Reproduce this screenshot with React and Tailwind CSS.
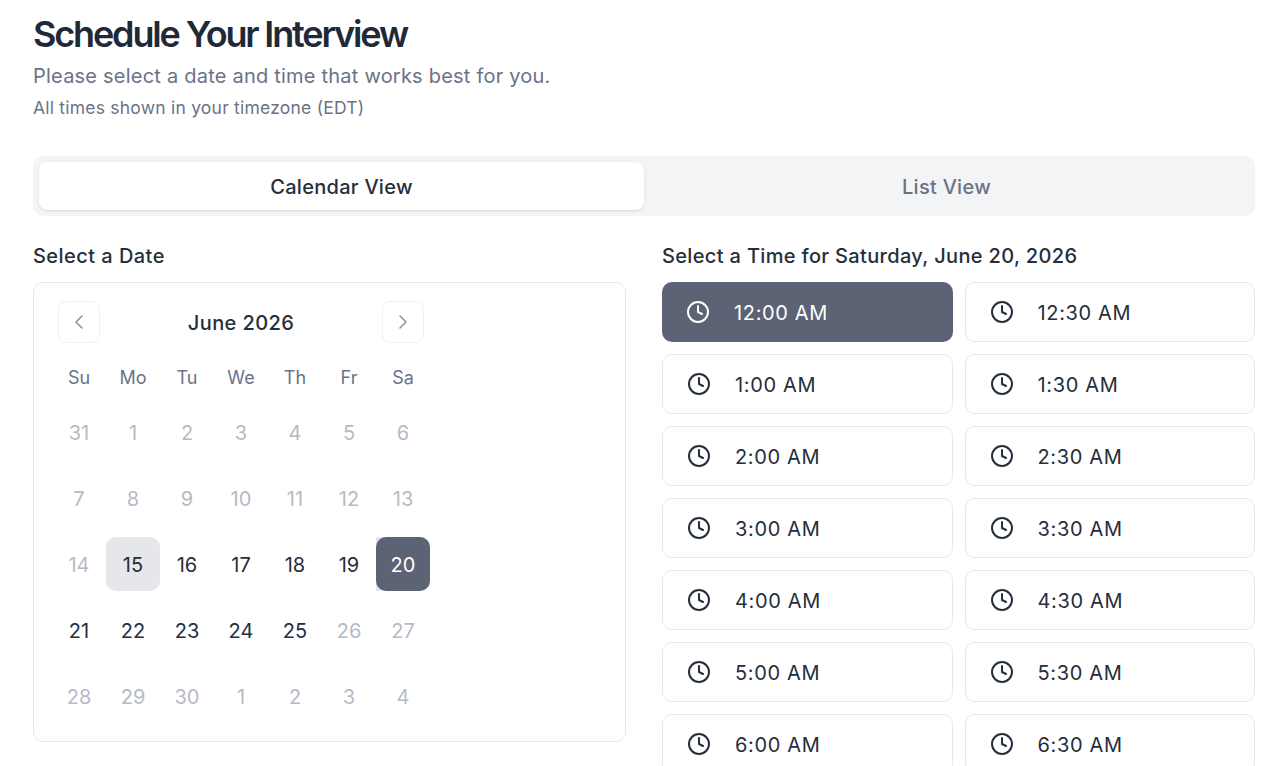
import { Clock, ChevronLeft, ChevronRight } from 'lucide-react'
import clsx from 'clsx'

const weekdays = ['Su', 'Mo', 'Tu', 'We', 'Th', 'Fr', 'Sa']

const days = [
  [31, 1, 2, 3, 4, 5, 6].map((d) => ({ d, muted: true })),
  [7, 8, 9, 10, 11, 12, 13].map((d) => ({ d, muted: true })),
  [{ d: 14, muted: true }, { d: 15, today: true }, { d: 16 }, { d: 17 }, { d: 18 }, { d: 19 }, { d: 20, selected: true }],
  [{ d: 21 }, { d: 22 }, { d: 23 }, { d: 24 }, { d: 25 }, { d: 26, muted: true }, { d: 27, muted: true }],
  [28, 29, 30, 1, 2, 3, 4].map((d) => ({ d, muted: true })),
]

const times = ['12:00 AM', '12:30 AM', '1:00 AM', '1:30 AM', '2:00 AM', '2:30 AM', '3:00 AM', '3:30 AM', '4:00 AM', '4:30 AM', '5:00 AM', '5:30 AM', '6:00 AM', '6:30 AM']

function DayCell({ day }) {
  if (day.selected) return (
    <div className="w-[54px] h-[54px] bg-[#e5e7eb] rounded-r-[10px]">
      <div className="w-full h-full flex items-center justify-center rounded-[10px] bg-[#5b6375] pt-[2px] text-white">{day.d}</div>
    </div>
  )
  return (
    <div className={clsx('w-[54px] h-[54px] flex items-center justify-center rounded-[10px] pt-[2px]',
      day.muted ? 'text-[#b6bac6]' : 'text-[#262e3b]', day.today && 'bg-[#e5e7eb]')}>
      {day.d}
    </div>
  )
}

function TimeSlot({ time, selected }) {
  return (
    <div className={clsx('h-[60px] flex items-center gap-6 rounded-[10px] px-6 text-[20px] tracking-[0.65px]',
      selected ? 'bg-[#5b6375] text-white' : 'bg-white border border-[#e5e7eb] text-[#262e3b]')}>
      <Clock className="w-6 h-6" strokeWidth={2} />
      <span className="pt-[2px]">{time}</span>
    </div>
  )
}

export default function App() {
  return (
    <div className="h-[766px] overflow-hidden bg-white pl-[33px] pr-[27px] pt-[10px] font-['Inter',sans-serif]">
      <h1 className="text-[36px] leading-[48px] font-semibold tracking-[-2.15px] text-[#1f2937]">Schedule Your Interview</h1>
      <p className="mt-1 text-[20px] leading-[28px] tracking-[0.22px] text-[#6b7288]">Please select a date and time that works best for you.</p>
      <p className="mt-[6px] text-[17.5px] leading-[24px] tracking-[0.22px] text-[#6b7288]">All times shown in your timezone (EDT)</p>

      <div className="mt-9 h-[60px] flex rounded-[10px] bg-[#f3f4f6] p-[6px] text-[20px] font-[450] tracking-[0.28px]">
        <div className="flex-1 flex items-center justify-center rounded-lg bg-white pt-[2px] text-[#262e3b] shadow-sm">Calendar View</div>
        <div className="flex-1 flex items-center justify-center pt-[2px] text-[#6b7288]">List View</div>
      </div>

      <div className="mt-6 grid grid-cols-2 gap-9">
        <div>
          <h2 className="text-[20px] leading-[32px] font-[450] tracking-[0.45px] text-[#262e3b]">Select a Date</h2>
          <div className="mt-[10px] h-[460px] rounded-[10px] border border-[#e5e7eb] px-[18px] pt-[18px] text-[20px]">
            <div className="w-[378px] flex items-center justify-between px-[6px]">
              <button className="w-[42px] h-[42px] flex items-center justify-center rounded-lg border border-[#f0f1f3] text-[#8b8f99]">
                <ChevronLeft className="w-6 h-6" strokeWidth={1.5} />
              </button>
              <span className="pt-[2px] font-[450] tracking-[0.4px] text-[#262e3b]">June 2026</span>
              <button className="w-[42px] h-[42px] flex items-center justify-center rounded-lg border border-[#f0f1f3] text-[#8b8f99]">
                <ChevronRight className="w-6 h-6" strokeWidth={1.5} />
              </button>
            </div>
            <div className="mt-[21px] w-[378px] grid grid-cols-7 text-center text-[#6b7288] text-[18px] leading-[28px]">
              {weekdays.map((w) => <div key={w}>{w}</div>)}
            </div>
            <div className="mt-[13px] flex flex-col gap-3">
              {days.map((row, i) => (
                <div key={i} className="flex">
                  {row.map((day, j) => <DayCell key={j} day={day} />)}
                </div>
              ))}
            </div>
          </div>
        </div>

        <div>
          <h2 className="text-[20px] leading-[32px] font-[450] tracking-[0.34px] text-[#262e3b]">Select a Time for Saturday, June 20, 2026</h2>
          <div className="mt-[10px] grid grid-cols-2 gap-3">
            {times.map((t, i) => <TimeSlot key={t} time={t} selected={i === 0} />)}
          </div>
        </div>
      </div>
    </div>
  )
}
